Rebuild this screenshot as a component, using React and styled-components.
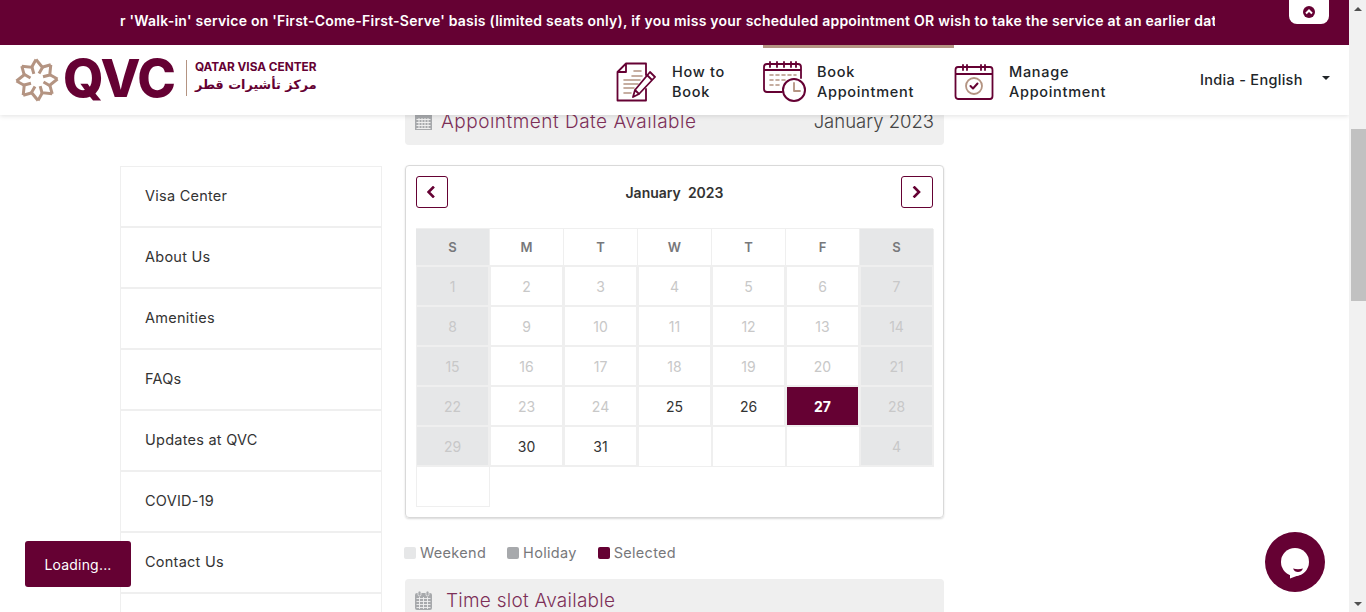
import React from 'react';
import styled, { createGlobalStyle } from 'styled-components';

const WINE = '#650133';
const TAN = '#b49482';
const FONT = 'Inter, "Open Sans", sans-serif';

const GlobalStyle = createGlobalStyle`
  html, body {
    margin: 0;
    padding: 0;
    height: 100%;
    overflow: hidden;
    background: #fff;
    font-family: ${FONT};
    color: #212529;
  }
  * { box-sizing: border-box; }
`;

const MENU = ['Visa Center', 'About Us', 'Amenities', 'FAQs', 'Updates at QVC', 'COVID-19', 'Contact Us', ''];

const NAV = [
  { id: 'how', top: 'How to', bottom: 'Book', Icon: DocIcon, width: 147, iconBox: 56 },
  { id: 'book', top: 'Book', bottom: 'Appointment', Icon: ClockCalIcon, width: 191, iconBox: 54, active: true },
  { id: 'manage', top: 'Manage', bottom: 'Appointment', Icon: CheckCalIcon, width: 200, iconBox: 55 },
];

const WEEK = ['S', 'M', 'T', 'W', 'T', 'F', 'S'];

// k: w = weekend, o = off (greyed), a = available, s = selected, e = empty
const CELLS = [
  [['1', 'w'], ['2', 'o'], ['3', 'o'], ['4', 'o'], ['5', 'o'], ['6', 'o'], ['7', 'w']],
  [['8', 'w'], ['9', 'o'], ['10', 'o'], ['11', 'o'], ['12', 'o'], ['13', 'o'], ['14', 'w']],
  [['15', 'w'], ['16', 'o'], ['17', 'o'], ['18', 'o'], ['19', 'o'], ['20', 'o'], ['21', 'w']],
  [['22', 'w'], ['23', 'o'], ['24', 'o'], ['25', 'a'], ['26', 'a'], ['27', 's'], ['28', 'w']],
  [['29', 'w'], ['30', 'a'], ['31', 'a'], ['', 'e'], ['', 'e'], ['', 'e'], ['4', 'w']],
  [['', 'e']],
];

function Star() {
  const arms = Array.from({ length: 8 }, (_, i) => i * 45);
  return (
    <svg width="44" height="44" viewBox="0 0 44 44" fill="none" stroke={TAN} strokeWidth="3" strokeLinejoin="miter">
      {arms.map((a) => (
        <g key={a} transform={`rotate(${a} 22 22)`}>
          <path d="M21 1.500L27.500 9.500L24 15.500" />
          <path d="M21 1.500L16.500 9.500" />
        </g>
      ))}
    </svg>
  );
}

function DocIcon() {
  return (
    <svg width="40" height="40" viewBox="0 0 40 40" fill="none" strokeLinecap="round" strokeLinejoin="round">
      <path d="M10 1.500H30V13M30 27V38.500H1.500V10L10 1.500V10H1.500" stroke={WINE} strokeWidth="1.800" />
      <path d="M18 9H25M16 14H26M8 18H24M8 22H22M8 26H18M8 31H15" stroke={TAN} strokeWidth="1.600" />
      <path d="M34 10L39 15L23 32L17 35L19 28Z M31 13L36 18 M19 28L23 32" stroke={WINE} strokeWidth="1.800" />
    </svg>
  );
}

function ClockCalIcon() {
  return (
    <svg width="44" height="42" viewBox="0 0 44 42" fill="none" strokeLinecap="round" strokeLinejoin="round">
      <path d="M19 31H4Q1 31 1 28V6Q1 3 4 3H35Q38 3 38 6V17M1 9H38" stroke={WINE} strokeWidth="1.800" />
      <path d="M7 1V6M14 1V6M21 1V6M28 1V6M33 1V6" stroke={WINE} strokeWidth="1.800" />
      <path d="M7 14H10M13 14H16M19 14H22M25 14H28M31 14H33M7 19H10M13 19H16M19 19H22M7 24H10M13 24H16" stroke={TAN} strokeWidth="1.600" />
      <circle cx="31" cy="29" r="11" stroke={WINE} strokeWidth="2" fill="#fff" />
      <path d="M31 22V30H37" stroke={TAN} strokeWidth="1.800" />
    </svg>
  );
}

function CheckCalIcon() {
  return (
    <svg width="40" height="36" viewBox="0 0 40 36" fill="none" strokeLinecap="round" strokeLinejoin="round">
      <path d="M4 3H36Q38.500 3 38.500 6V32Q38.500 35 36 35H4Q1.500 35 1.500 32V6Q1.500 3 4 3ZM1.500 10H38.500" stroke={WINE} strokeWidth="1.800" />
      <path d="M9 1V6M13 1V6M27 1V6M31 1V6" stroke={WINE} strokeWidth="1.800" />
      <circle cx="20" cy="22" r="8" stroke={TAN} strokeWidth="1.800" />
      <path d="M16.500 22L19 24.500L23.500 19.500" stroke={WINE} strokeWidth="2" />
    </svg>
  );
}

function GridIcon() {
  return (
    <svg width="17" height="15" viewBox="0 0 17 15">
      <rect x="0" y="0" width="17" height="15" fill="#a7a9ac" />
      <path d="M1.500 4.500H15.500M1.500 7.500H15.500M1.500 10.500H15.500M1.500 13.500H15.500M4 3V14M7 3V14M10 3V14M13 3V14" stroke="#efefef" strokeWidth="1" />
    </svg>
  );
}

function CalendarGlyph() {
  return (
    <svg width="17" height="19" viewBox="0 0 17 19">
      <rect x="0" y="2" width="17" height="17" rx="2" fill="#a7a9ac" />
      <rect x="3" y="0" width="3" height="5" rx="1.500" fill="#a7a9ac" stroke="#efefef" strokeWidth="0.800" />
      <rect x="11" y="0" width="3" height="5" rx="1.500" fill="#a7a9ac" stroke="#efefef" strokeWidth="0.800" />
      <path d="M1.500 7.500H15.500M1.500 10.500H15.500M1.500 13.500H15.500M1.500 16.500H15.500M4.500 6V18M8.500 6V18M12.500 6V18" stroke="#efefef" strokeWidth="0.900" />
    </svg>
  );
}

function Chevron({ left }) {
  return (
    <svg width="10" height="12" viewBox="0 0 10 12" fill="none" stroke={WINE} strokeWidth="2.600" strokeLinecap="square">
      <path d={left ? 'M6 1.500L1.500 6L6 10.500' : 'M2.500 1.500L7 6L2.500 10.500'} />
    </svg>
  );
}

function ChatBubble() {
  return (
    <svg width="28" height="32" viewBox="0 0 28 32" style={{ marginTop: 4 }}>
      <circle cx="14" cy="14" r="14" fill="#fff" />
      <path d="M9 24L9 30.500L21 26Z" fill="#fff" />
      <path d="M12 20.500Q17 22 22 20.500Q20.500 24 17 24Q13.500 24 12 20.500Z" fill={WINE} />
    </svg>
  );
}

export default function App() {
  return (
    <>
      <GlobalStyle />
      <Screen>
        <Page>
          <Notice>
            <NoticeText>
              r 'Walk-in' service on 'First-Come-First-Serve' basis (limited seats only), if you miss your scheduled appointment OR wish to take the service at an earlier dat
            </NoticeText>
            <CollapseTab>
              <svg width="12" height="12" viewBox="0 0 12 12">
                <circle cx="6" cy="6" r="6" fill={WINE} />
                <path d="M3 7.500L6 4.500L9 7.500" fill="none" stroke="#fff" strokeWidth="2" />
              </svg>
            </CollapseTab>
          </Notice>

          <Header>
            <Logo>
              <Star />
              <LogoMark>QVC</LogoMark>
              <LogoText>
                <LogoLatin>QATAR VISA CENTER</LogoLatin>
                <LogoArabic dir="rtl">مركز تأشيرات قطر</LogoArabic>
              </LogoText>
            </Logo>
            <Nav>
              {NAV.map(({ id, top, bottom, Icon, active, width, iconBox }) => (
                <NavItem key={id} $active={active} $width={width}>
                  <NavIcon $width={iconBox}><Icon /></NavIcon>
                  <NavLabel>{top}<br />{bottom}</NavLabel>
                </NavItem>
              ))}
            </Nav>
            <Locale>
              India - English
              <Caret />
            </Locale>
          </Header>

          <Content>
            <Sidebar>
              {MENU.map((m, i) => (
                <MenuItem key={i}>{m}</MenuItem>
              ))}
            </Sidebar>
            <Main>
              <DateBar>
                <BarLabel><GridIcon />Appointment Date Available</BarLabel>
                <BarMonth>January 2023</BarMonth>
              </DateBar>
              <CalendarCard>
                <CalendarHead>
                  <MonthButton><Chevron left /></MonthButton>
                  <MonthTitle>January&nbsp;&nbsp;2023</MonthTitle>
                  <MonthButton><Chevron /></MonthButton>
                </CalendarHead>
                <WeekRow>
                  {WEEK.map((d, i) => (
                    <WeekCell key={i} $weekend={i === 0 || i === 6}>{d}</WeekCell>
                  ))}
                </WeekRow>
                {CELLS.map((row, r) => (
                  <DayRow key={r}>
                    {row.map(([label, kind], c) => (
                      <DayCell key={c} $kind={kind}>{label}</DayCell>
                    ))}
                  </DayRow>
                ))}
              </CalendarCard>
              <Legend>
                <LegendItem><Swatch $color="#e6e7e8" />Weekend</LegendItem>
                <LegendItem><Swatch $color="#a7a9ac" />Holiday</LegendItem>
                <LegendItem><Swatch $color={WINE} />Selected</LegendItem>
              </Legend>
              <SlotBar>
                <CalendarGlyph />
                <SlotLabel>Time slot Available</SlotLabel>
              </SlotBar>
            </Main>
          </Content>

          <LoadingToast>Loading...</LoadingToast>
          <ChatButton><ChatBubble /></ChatButton>
        </Page>

        <Scrollbar>
          <ScrollArrow $up />
          <ScrollTrack><ScrollThumb /></ScrollTrack>
          <ScrollArrow />
        </Scrollbar>
      </Screen>
    </>
  );
}

const Screen = styled.div`
  display: flex;
  width: 1366px;
  height: 612px;
  overflow: hidden;
`;

const Page = styled.div`
  position: relative;
  flex: 1;
  min-width: 0;
  display: flex;
  flex-direction: column;
  overflow: hidden;
`;

const Notice = styled.div`
  position: relative;
  z-index: 3;
  flex: none;
  height: 45px;
  padding-left: 120px;
  background: ${WINE};
`;

const NoticeText = styled.div`
  width: 1095px;
  overflow: hidden;
  white-space: nowrap;
  font-size: 14px;
  font-weight: 600;
  letter-spacing: 0.23px;
  line-height: 41px;
  color: #fff;
`;

const CollapseTab = styled.div`
  position: absolute;
  top: 0;
  left: 1289px;
  width: 40px;
  height: 24px;
  display: flex;
  align-items: center;
  justify-content: center;
  background: #fff;
  border-radius: 0 0 8px 8px;
`;

const Header = styled.header`
  position: relative;
  z-index: 2;
  flex: none;
  height: 70px;
  display: flex;
  align-items: stretch;
  padding-left: 15px;
  background: #fff;
  box-shadow: 0 1px 5px rgba(0, 0, 0, 0.12);
`;

const Logo = styled.div`
  display: flex;
  align-items: center;
  width: 601px;
  height: 70px;
`;

const LogoMark = styled.span`
  margin: 0 0 4px 4px;
  font-size: 52px;
  font-weight: 800;
  letter-spacing: -1px;
  color: ${WINE};
`;

const LogoText = styled.div`
  margin: 0 0 5px 11px;
  padding-left: 8px;
  border-left: 1px solid ${TAN};
  display: flex;
  flex-direction: column;
  height: 36px;
  justify-content: center;
`;

const LogoLatin = styled.span`
  font-size: 11.800px;
  font-weight: 700;
  line-height: 14px;
  color: ${WINE};
`;

const LogoArabic = styled.span`
  font-family: "DejaVu Sans", sans-serif;
  font-size: 12.800px;
  font-weight: 700;
  line-height: 22px;
  color: ${WINE};
  text-align: left;
`;

const Nav = styled.nav`
  display: flex;
  align-items: stretch;
`;

const NavItem = styled.a`
  display: flex;
  align-items: center;
  width: ${(p) => p.$width}px;
  border-top: 3px solid ${(p) => (p.$active ? TAN : 'transparent')};
`;

const NavIcon = styled.span`
  flex: none;
  width: ${(p) => p.$width}px;
  display: flex;
`;

const NavLabel = styled.span`
  font-size: 14.500px;
  font-weight: 500;
  letter-spacing: 0.700px;
  line-height: 20px;
  color: #212529;
`;

const Locale = styled.div`
  display: flex;
  align-items: center;
  padding-bottom: 2px;
  margin-left: 46px;
  font-size: 14.500px;
  font-weight: 500;
  letter-spacing: 0.300px;
  color: #212529;
`;

const Caret = styled.span`
  margin-left: 19px;
  margin-bottom: 3px;
  border-top: 4px solid #212529;
  border-left: 4px solid transparent;
  border-right: 4px solid transparent;
`;

const Content = styled.main`
  flex: 1;
  display: flex;
  align-items: flex-start;
  gap: 23px;
  padding-left: 120px;
`;

const Sidebar = styled.aside`
  flex: none;
  width: 262px;
  margin-top: 51px;
  border-left: 1px solid #efefef;
  border-right: 1px solid #efefef;
  border-top: 1px solid #efefef;
`;

const MenuItem = styled.div`
  height: 61px;
  padding-left: 24px;
  border-bottom: 2px solid #efefef;
  font-size: 14.500px;
  letter-spacing: 0.250px;
  line-height: 58px;
  color: #333;
`;

const Main = styled.div`
  flex: none;
  width: 539px;
  margin-top: -15px;
`;

const DateBar = styled.div`
  height: 45px;
  display: flex;
  align-items: flex-start;
  justify-content: space-between;
  padding: 11px 10px 0 10px;
  background: #efefef;
  border-radius: 4px;
`;

const BarLabel = styled.div`
  display: flex;
  align-items: center;
  gap: 9px;
  font-size: 19px;
  font-weight: 300;
  letter-spacing: 0.500px;
  line-height: 22px;
  color: #7d2f58;
`;

const BarMonth = styled.div`
  font-size: 18.500px;
  font-weight: 300;
  line-height: 20px;
  color: #444;
`;

const CalendarCard = styled.section`
  margin-top: 20px;
  height: 353px;
  padding: 10px 10px 0 10px;
  border: 1px solid #d9d9d9;
  border-radius: 4px;
  box-shadow: 0 1px 2px rgba(0, 0, 0, 0.15);
`;

const CalendarHead = styled.div`
  height: 52px;
  display: flex;
  align-items: flex-start;
  justify-content: space-between;
`;

const MonthTitle = styled.div`
  font-size: 14px;
  font-weight: 600;
  line-height: 34px;
  color: #333;
`;

const MonthButton = styled.button`
  width: 32px;
  height: 32px;
  padding: 0;
  display: flex;
  align-items: center;
  justify-content: center;
  background: #fff;
  border: 1px solid ${WINE};
  border-radius: 3px;
`;

const WeekRow = styled.div`
  display: grid;
  grid-template-columns: repeat(7, 74px);
  height: 39px;
  border-top: 1px solid #efefef;
`;

const WeekCell = styled.div`
  display: flex;
  align-items: center;
  justify-content: center;
  font-size: 13px;
  font-weight: 600;
  color: #77787b;
  background: ${(p) => (p.$weekend ? '#e6e7e8' : '#fff')};
  border-right: 1px solid #efefef;
  border-bottom: 2px solid #efefef;
`;

const DayRow = styled.div`
  display: grid;
  grid-template-columns: repeat(7, 74px);
  height: 40px;
`;

const dayBg = { w: '#e6e7e8', s: WINE };
const dayColor = { w: '#c8c8c8', o: '#c8c8c8', a: '#333', s: '#fff' };

const DayCell = styled.div`
  display: flex;
  align-items: center;
  justify-content: center;
  font-size: 14px;
  font-weight: ${(p) => (p.$kind === 's' ? 700 : 400)};
  color: ${(p) => dayColor[p.$kind] || '#333'};
  background: ${(p) => dayBg[p.$kind] || '#fff'};
  border: 0 solid #efefef;
  border-right-width: ${(p) => (p.$kind === 'e' ? 1 : 2)}px;
  border-bottom-width: ${(p) => (p.$kind === 'e' ? 1 : 2)}px;
  border-left-width: 1px;
`;

const Legend = styled.div`
  display: flex;
  gap: 21px;
  margin-top: 26px;
  margin-left: -1px;
`;

const LegendItem = styled.div`
  display: flex;
  align-items: center;
  gap: 4px;
  font-size: 14.500px;
  letter-spacing: 0.300px;
  color: #77787b;
`;

const Swatch = styled.span`
  width: 12px;
  height: 12px;
  border-radius: 2px;
  background: ${(p) => p.$color};
`;

const SlotBar = styled.div`
  margin-top: 18px;
  height: 45px;
  display: flex;
  align-items: center;
  gap: 14px;
  padding: 0 0 2px 10px;
  background: #efefef;
  border-radius: 4px;
`;

const SlotLabel = styled.span`
  font-size: 19px;
  font-weight: 300;
  letter-spacing: 0.250px;
  color: #7d2f58;
`;

const LoadingToast = styled.div`
  position: absolute;
  left: 25px;
  top: 541px;
  width: 106px;
  height: 46px;
  display: flex;
  align-items: center;
  justify-content: center;
  background: ${WINE};
  border-radius: 3px;
  color: #fff;
  font-size: 14px;
  letter-spacing: 0.200px;
`;

const ChatButton = styled.div`
  position: absolute;
  left: 1265px;
  top: 532px;
  width: 60px;
  height: 60px;
  display: flex;
  align-items: center;
  justify-content: center;
  border-radius: 50%;
  background: ${WINE};
`;

const Scrollbar = styled.div`
  flex: none;
  width: 17px;
  display: flex;
  flex-direction: column;
  background: #f1f1f1;
`;

const ScrollArrow = styled.div`
  flex: none;
  height: 17px;
  display: flex;
  align-items: center;
  justify-content: center;
  &::before {
    content: '';
    border-left: 4px solid transparent;
    border-right: 4px solid transparent;
    ${(p) => (p.$up ? 'border-bottom: 4px solid #505050;' : 'border-top: 4px solid #505050;')}
  }
`;

const ScrollTrack = styled.div`
  flex: 1;
  padding-top: 112px;
`;

const ScrollThumb = styled.div`
  width: 15px;
  margin-left: 2px;
  height: 172px;
  background: #c1c1c1;
`;
